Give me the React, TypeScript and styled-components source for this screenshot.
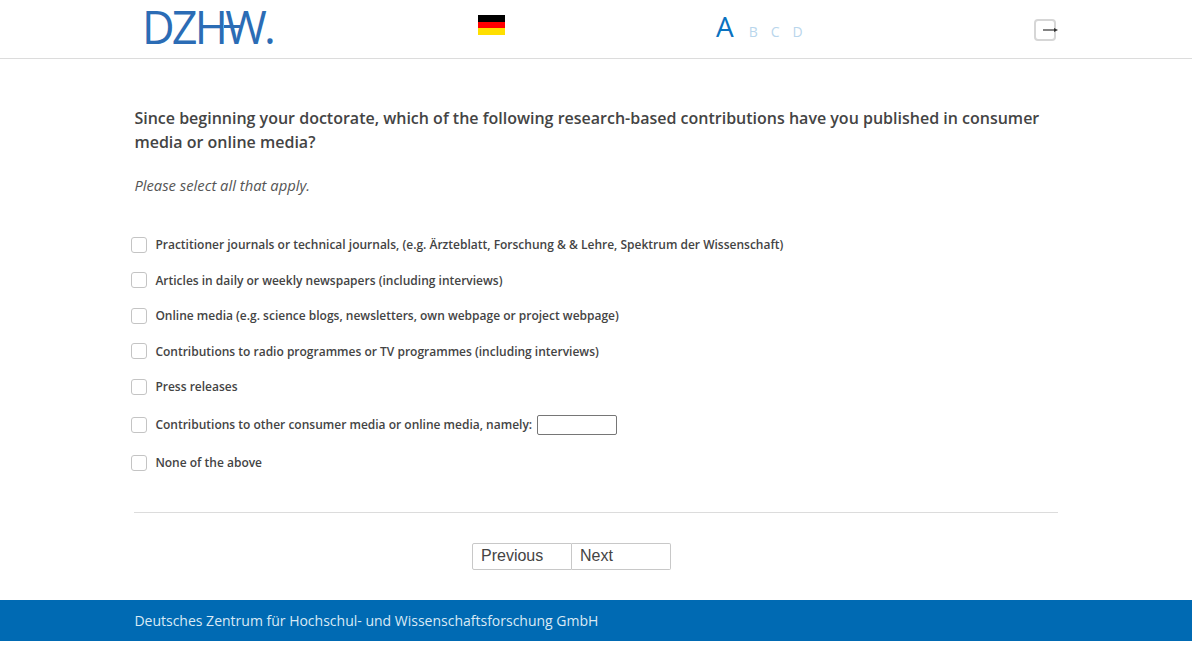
import styled, { createGlobalStyle } from 'styled-components';

const GlobalStyle = createGlobalStyle`
  html, body {
    margin: 0;
    padding: 0;
    background: #fff;
    font-family: "Open Sans", "Noto Sans", sans-serif;
    color: #444;
  }
`;

const Header = styled.header`
  height: 58px;
  border-bottom: 1px solid #dcdcdc;
  display: grid;
  grid-template-columns: 332px 238px 318px 1fr;
  align-items: start;
  padding-left: 146px;
  padding-right: 136px;
`;

const Logo = styled.div`
  position: relative;
  font-family: "Open Sans", sans-serif;
  font-weight: 400;
  font-size: 45px;
  line-height: 54px;
  letter-spacing: -2.8px;
  color: #2b6cb5;
  white-space: nowrap;
  margin-left: -4px;
`;

/* the H's crossbar runs on into the W */
const LogoBar = styled.span`
  position: absolute;
  left: 82px;
  top: 25px;
  width: 16px;
  height: 3px;
  background: #2b6cb5;
`;

const Flag = styled.div`
  margin-top: 15px;
  width: 27px;
  height: 20px;
  background: linear-gradient(#000 0 33.3%, #f00 33.3% 66.6%, #ffdf00 66.6%);
`;

const Sizes = styled.div`
  display: flex;
  align-items: baseline;
  gap: 13px;
  padding-top: 7px;
`;

const SizeLetter = styled.span<{ $active?: boolean }>`
  color: ${p => (p.$active ? '#0a72c0' : '#b9d6ec')};
  font-size: ${p => (p.$active ? '28px' : '14px')};
  line-height: 38px;
  margin-right: ${p => (p.$active ? '2px' : '0')};
`;

const LogoutBox = styled.div`
  justify-self: end;
  margin-top: 19px;
  width: 18px;
  height: 18px;
  border: 2px solid #d6d6d6;
  border-radius: 4px;
  position: relative;
`;

const LogoutArrow = styled.svg`
  position: absolute;
  left: 7px;
  top: 4px;
`;

const Main = styled.main`
  padding: 47px 134.4px 0;
`;

const Question = styled.h1`
  margin: 0;
  font-size: 16px;
  line-height: 24px;
  font-weight: 600;
  color: #444;
`;

const Hint = styled.p`
  margin: 19px 0 0;
  font-size: 14.8px;
  line-height: 24px;
  font-style: italic;
  color: #555;
`;

const Options = styled.div`
  margin-top: 30px;
  margin-left: -3.4px;
  display: flex;
  flex-direction: column;
`;

const Option = styled.label<{ $height?: number }>`
  display: flex;
  align-items: center;
  gap: 8.4px;
  height: ${p => p.$height ?? 35.5}px;
  font-size: 12px;
  font-weight: 600;
  color: #444;
`;

const Box = styled.span`
  width: 14px;
  height: 14px;
  border: 1px solid #c4c4c4;
  border-radius: 3px;
  background: #fff;
  flex: none;
`;

const OtherInput = styled.input`
  box-sizing: border-box;
  width: 80px;
  height: 20px;
  margin-left: -3.4px;
  padding: 0 4px;
  border: 1px solid #767676;
  border-radius: 2px;
  background: #fff;
`;

const Divider = styled.hr`
  margin: 31px 0 0;
  border: 0;
  border-top: 1px solid #dcdcdc;
`;

const Nav = styled.div`
  display: flex;
  justify-content: center;
  margin-top: 30px;
  padding-right: 49px;
`;

const NavButton = styled.button<{ $first?: boolean }>`
  box-sizing: border-box;
  width: ${p => (p.$first ? '100px' : '99px')};
  height: 27px;
  padding: 0 0 0 8px;
  text-align: left;
  background: #fff;
  color: #444;
  font-family: "Liberation Sans", Arial, sans-serif;
  font-size: 16px;
  border: 1px solid #c8c8c8;
  border-left-width: ${p => (p.$first ? '1px' : '0')};
  border-radius: ${p => (p.$first ? '2px 0 0 2px' : '0 2px 2px 0')};
`;

const Footer = styled.footer`
  margin-top: 30px;
  height: 41px;
  background: #006ab3;
  color: #d9e9f5;
  font-size: 14px;
  line-height: 41px;
  padding-left: 134.4px;
`;

const options = [
  'Practitioner journals or technical journals, (e.g. Ärzteblatt, Forschung & & Lehre, Spektrum der Wissenschaft)',
  'Articles in daily or weekly newspapers (including interviews)',
  'Online media (e.g. science blogs, newsletters, own webpage or project webpage)',
  'Contributions to radio programmes or TV programmes (including interviews)',
  'Press releases',
];

export default function App() {
  return (
    <>
      <GlobalStyle />
      <Header>
        <Logo>
          DZHW.
          <LogoBar />
        </Logo>
        <Flag />
        <Sizes>
          <SizeLetter $active>A</SizeLetter>
          <SizeLetter>B</SizeLetter>
          <SizeLetter>C</SizeLetter>
          <SizeLetter>D</SizeLetter>
        </Sizes>
        <LogoutBox>
          <LogoutArrow width="16" height="10" viewBox="0 0 16 10">
            <path d="M0 5h12" stroke="#333" strokeWidth="1.2" />
            <path d="M11 3l4 2-4 2z" fill="#333" />
          </LogoutArrow>
        </LogoutBox>
      </Header>
      <Main>
        <Question>
          Since beginning your doctorate, which of the following research-based contributions have you published in consumer media or online media?
        </Question>
        <Hint>Please select all that apply.</Hint>
        <Options>
          {options.map(text => (
            <Option key={text}>
              <Box />
              {text}
            </Option>
          ))}
          <Option $height={40}>
            <Box />
            Contributions to other consumer media or online media, namely:
            <OtherInput type="text" />
          </Option>
          <Option $height={36}>
            <Box />
            None of the above
          </Option>
        </Options>
        <Divider />
        <Nav>
          <NavButton $first>Previous</NavButton>
          <NavButton>Next</NavButton>
        </Nav>
      </Main>
      <Footer>Deutsches Zentrum für Hochschul- und Wissenschaftsforschung GmbH</Footer>
    </>
  );
}
